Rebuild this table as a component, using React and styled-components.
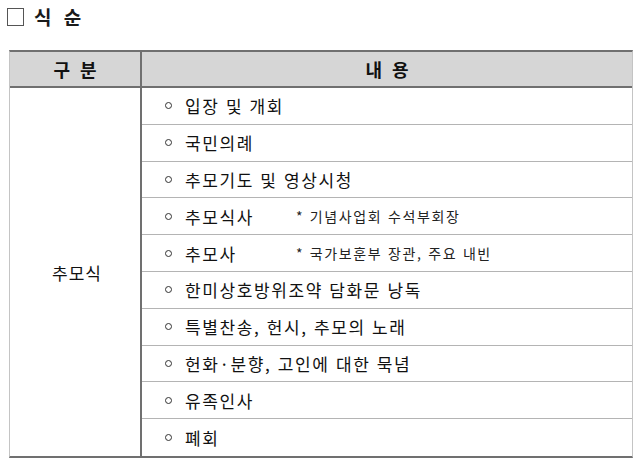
import React from 'react';
import styled, { createGlobalStyle } from 'styled-components';

const ITEMS = [
  { text: '입장 및 개회' },
  { text: '국민의례' },
  { text: '추모기도 및 영상시청' },
  { text: '추모식사', note: '* 기념사업회 수석부회장' },
  { text: '추모사', note: '* 국가보훈부 장관, 주요 내빈' },
  { text: '한미상호방위조약 담화문 낭독' },
  { text: '특별찬송, 헌시, 추모의 노래' },
  { text: '헌화·분향, 고인에 대한 묵념' },
  { text: '유족인사' },
  { text: '폐회' },
];

export default function App() {
  return (
    <>
      <GlobalStyle />
      <Page>
        <Title>
          <TitleBox />
          <span>식 순</span>
        </Title>
        <Table>
          <HeadCell>구 분</HeadCell>
          <HeadCell $right>내 용</HeadCell>
          <GroupCell>추모식</GroupCell>
          <List>
            {ITEMS.map((item, i) => (
              <Row key={item.text} $last={i === ITEMS.length - 1}>
                <Bullet />
                <ItemText $withNote={!!item.note}>{item.text}</ItemText>
                {item.note && <Note>{item.note}</Note>}
              </Row>
            ))}
          </List>
        </Table>
      </Page>
    </>
  );
}

/******************** styled components ************************/

const GlobalStyle = createGlobalStyle`
  html, body {
    margin: 0;
    padding: 0;
    background: #ffffff;
  }
  body {
    font-family: "Noto Sans CJK KR", "Noto Sans", sans-serif;
    color: #111111;
  }
`;

const Page = styled.div`
  width: 640px;
  height: 465px;
  padding: 4px 7px 0 9px;
  box-sizing: border-box;
  overflow: hidden;
`;

const Title = styled.div`
  display: flex;
  align-items: center;
  gap: 10px;
  height: 24px;
  margin-left: -2px;
  font-size: 19px;
  font-weight: 700;
  letter-spacing: 4px;
  color: #1a1a1a;
`;

const TitleBox = styled.div`
  width: 15px;
  height: 16px;
  border: 1px solid #555;
  margin-top: 1px;
`;

const Table = styled.div`
  margin-top: 22px;
  display: grid;
  grid-template-columns: 130px 1fr;
  grid-template-rows: 36px 1fr;
  border-top: 2px solid #707070;
  border-bottom: 2px solid #707070;
  border-left: 1px solid #c4c4c4;
  border-right: 1px solid #c4c4c4;
  width: 624px;
  box-sizing: border-box;
`;

const HeadCell = styled.div`
  background: #d6d6d6;
  border-bottom: 2px solid #707070;
  border-left: ${({ $right }) => ($right ? '2px solid #707070' : 'none')};
  display: flex;
  align-items: center;
  justify-content: center;
  font-size: 18px;
  font-weight: 700;
  letter-spacing: 3px;
  padding-left: 3px;
`;

const GroupCell = styled.div`
  display: flex;
  align-items: center;
  justify-content: center;
  font-size: 17px;
  letter-spacing: 1px;
  padding-top: 2px;
  padding-left: 4px;
`;

const List = styled.div`
  border-left: 2px solid #707070;
  display: flex;
  flex-direction: column;
`;

const Row = styled.div`
  height: 36.8px;
  display: flex;
  align-items: center;
  padding-left: 23px;
  border-bottom: ${({ $last }) => ($last ? 'none' : '1px solid #b4b4b4')};
  box-sizing: border-box;
`;

const Bullet = styled.span`
  width: 5px;
  height: 5px;
  border: 1px solid #333;
  border-radius: 50%;
  margin-right: 13px;
  flex-shrink: 0;
`;

const ItemText = styled.span`
  font-size: 17px;
  letter-spacing: 1.6px;
  word-spacing: 1px;
  width: ${({ $withNote }) => ($withNote ? '111px' : 'auto')};
  flex-shrink: 0;
`;

const Note = styled.span`
  font-size: 14px;
  letter-spacing: 1.6px;
  word-spacing: 1px;
  color: #222;
`;
